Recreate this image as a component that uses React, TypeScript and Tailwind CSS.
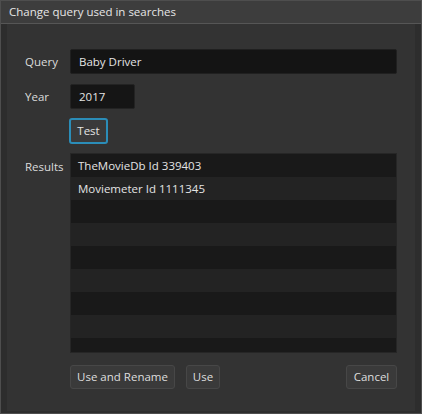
import React from "react";

const font = { fontFamily: '"Segoe UI", "Open Sans", "Noto Sans", sans-serif' };

function Btn({ children, w }: { children: React.ReactNode; w: string }) {
  return (
    <div
      className={`h-[24px] ${w} flex items-center justify-center rounded-[3px] border border-[#474747] bg-[#3a3a3a] text-[11.5px] text-[#dedede]`}
    >
      {children}
    </div>
  );
}

export default function App() {
  const rows = [
    "TheMovieDb Id 339403",
    "Moviemeter Id 1111345",
    "",
    "",
    "",
    "",
    "",
    "",
    "",
  ];
  return (
    <div
      className="w-[422px] h-[414px] flex flex-col border border-[#4e4e4e] bg-[#2d2d2d] text-[#dcdcdc] overflow-hidden"
      style={font}
    >
      <div className="h-[23px] shrink-0 flex items-center pl-[8px] bg-[#3d3d3d] border-b border-[#565656] text-[11.5px] text-[#e6e6e6]">
        Change query used in searches
      </div>
      <div className="flex-1 flex flex-col px-[6px] pb-[2px]">
        <div className="flex-1 bg-[#333333] pl-[18px] pr-[18px] pt-[25px] flex flex-col text-[11.5px]">
          <div className="flex items-center h-[25px]">
            <div className="w-[45px]">Query</div>
            <div className="flex-1 h-[25px] flex items-center pl-[8px] rounded-[2px] bg-[#141414] border border-[#202020] text-[#e4e4e4]">
              Baby Driver
            </div>
          </div>
          <div className="flex items-center h-[25px] mt-[10px]">
            <div className="w-[45px]">Year</div>
            <div className="w-[65px] h-[25px] flex items-center pl-[8px] rounded-[2px] bg-[#151515] border border-[#232323] text-[#e4e4e4]">
              2017
            </div>
          </div>
          <div className="flex mt-[9px] pl-[44px]">
            <div className="w-[39px] h-[26px] flex items-center justify-center rounded-[3px] border-2 border-[#2b8db8] bg-[#3a3a3a] text-[#e4e4e4]">
              Test
            </div>
          </div>
          <div className="flex mt-[9px]">
            <div className="w-[45px] pt-[5px]">Results</div>
            <div className="flex-1 h-[200px] border border-[#262626] bg-[#171717] overflow-hidden flex flex-col">
              {rows.map((r, i) => (
                <div
                  key={i}
                  className={`h-[23px] shrink-0 flex items-center pl-[7px] text-[#e4e4e4] ${
                    i % 2 === 0 ? "bg-[#191919]" : "bg-[#232323]"
                  }`}
                >
                  {r}
                </div>
              ))}
            </div>
          </div>
          <div className="flex mt-[12px] pl-[45px]">
            <Btn w="w-[105px]">Use and Rename</Btn>
            <div className="w-[11px]" />
            <Btn w="w-[34px]">Use</Btn>
            <div className="flex-1" />
            <Btn w="w-[51px]">Cancel</Btn>
          </div>
        </div>
      </div>
    </div>
  );
}
